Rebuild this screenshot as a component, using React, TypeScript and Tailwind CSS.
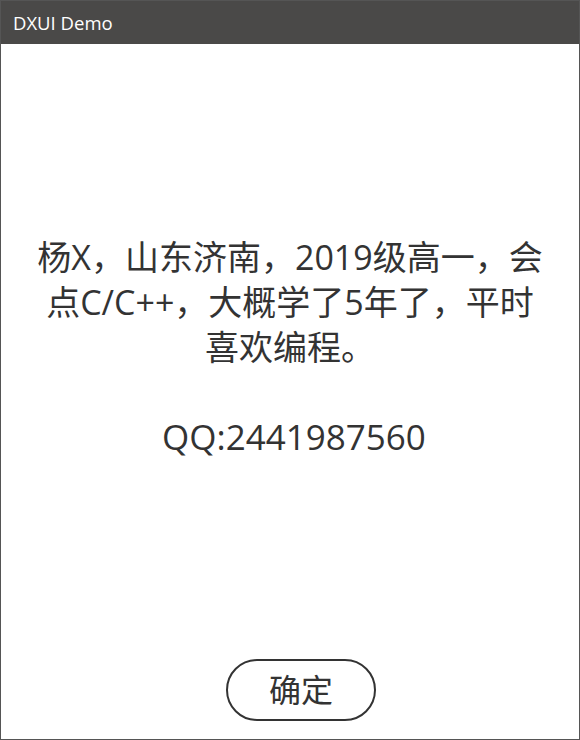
export default function App() {
  return (
    <div
      className="flex h-[740px] w-[580px] flex-col border border-[#555] bg-white text-[#333]"
      style={{ fontFamily: '"Open Sans", "Noto Sans CJK SC", sans-serif' }}
    >
      <div className="flex h-[43px] shrink-0 items-center bg-[#4a4948] pl-3 text-[18.5px] text-white">
        DXUI Demo
      </div>
      <div className="flex flex-1 flex-col items-center">
        <p className="mt-[191px] w-[520px] text-center text-[34px] leading-[45px]">
          杨X，山东济南，2019级高一，会点C/C++，大概学了5年了，平时喜欢编程。
        </p>
        <p className="mt-[45px] pl-2 text-center text-[35px] leading-[43px]">QQ:2441987560</p>
        <div className="flex-1" />
        <button className="mb-[18px] ml-[22px] flex h-[62px] w-[150px] items-center justify-center rounded-full border-2 border-[#333] text-[32px] text-[#333]">
          确定
        </button>
      </div>
    </div>
  )
}
